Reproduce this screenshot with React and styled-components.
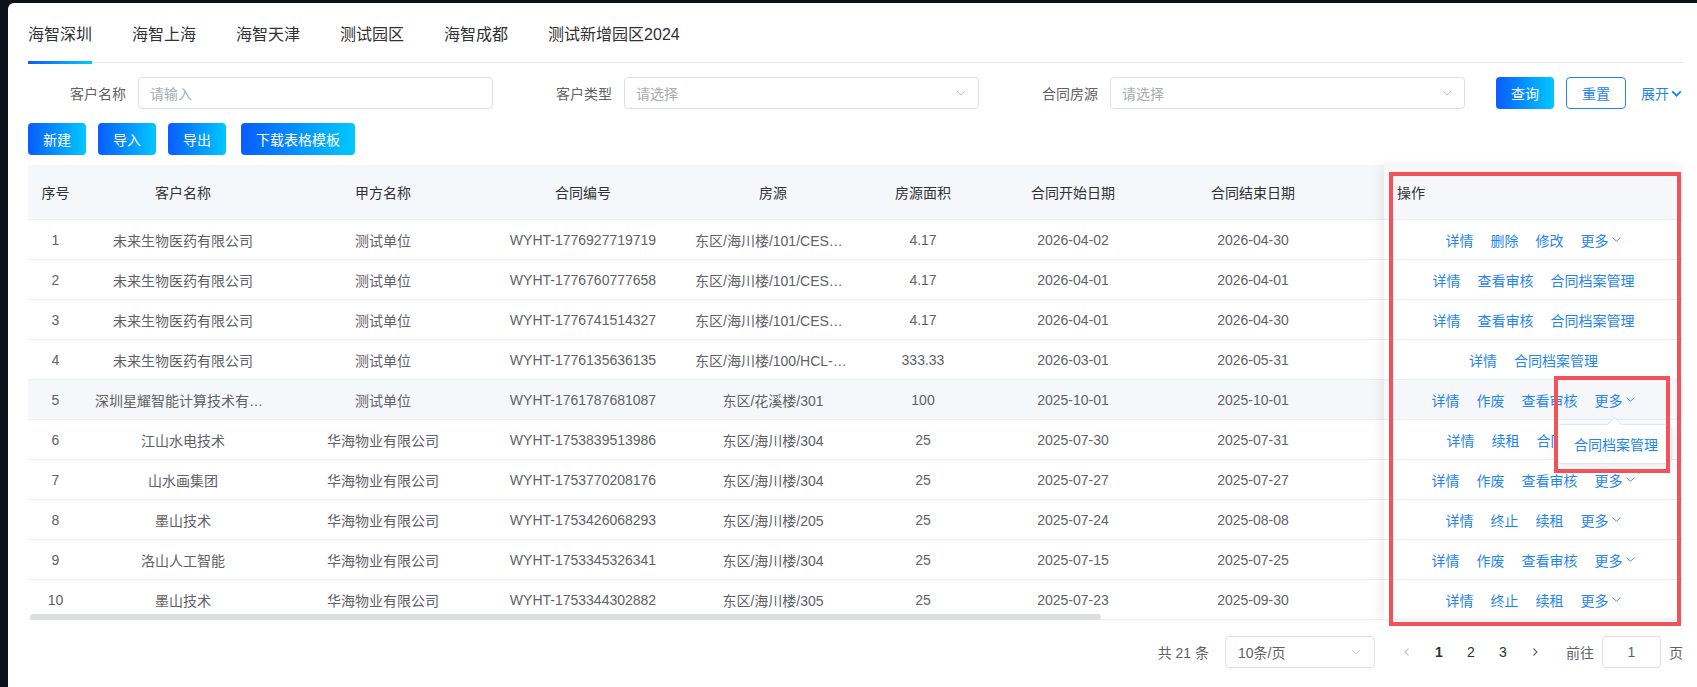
import styled, { createGlobalStyle } from "styled-components";

const GlobalStyle = createGlobalStyle`
  html, body {
    margin: 0;
    padding: 0;
    background: #0c111b;
  }
  body {
    font-family: "Liberation Sans", "Noto Sans CJK SC", sans-serif;
    font-size: 14px;
    color: #606266;
  }
  * { box-sizing: border-box; }
`;

const Page = styled.div`
  position: relative;
  width: 1697px;
  height: 687px;
  padding: 3px 0 0 8px;
  overflow: hidden;
`;

const Panel = styled.div`
  background: #fff;
  height: 684px;
  border-top-left-radius: 6px;
  padding: 0 14px 0 20px;
`;

// ---------- tabs ----------
const TabBar = styled.div`
  display: flex;
  gap: 40px;
  height: 60px;
  border-bottom: 1px solid #e4e7ed;
`;

const Tab = styled.div`
  position: relative;
  padding-top: 21px;
  font-size: 16px;
  line-height: 22px;
  color: #303133;
  height: 59px;

  &::after {
    content: "";
    display: ${p => (p.$active ? "block" : "none")};
    position: absolute;
    left: 0;
    right: 0;
    bottom: -2px;
    height: 3px;
    background: linear-gradient(90deg, #0a5cff, #00c8ff);
  }
`;

// ---------- filter ----------
const FilterRow = styled.div`
  display: flex;
  align-items: center;
  gap: 21px;
  margin-top: 14px;
  height: 32px;
`;

const Field = styled.div`
  display: flex;
  align-items: center;
  flex: 0 0 465px;
`;

const Label = styled.label`
  width: 110px;
  padding-right: 12px;
  text-align: right;
  color: #606266;
  font-size: 14px;
  white-space: nowrap;
`;

const InputBox = styled.div`
  flex: 1;
  height: 32px;
  border: 1px solid #dcdfe6;
  border-radius: 4px;
  padding: 0 11px;
  display: flex;
  align-items: center;
  justify-content: space-between;
  color: #a8abb2;
  font-size: 14px;
`;

const BtnGroup = styled.div`
  display: flex;
  align-items: center;
  gap: 12px;
  margin-left: 10px;
  flex-shrink: 0;
  white-space: nowrap;
`;

const GradBtn = styled.button`
  height: 32px;
  padding: 0 15px;
  border: none;
  border-radius: 4px;
  background: linear-gradient(90deg, #0a5cff, #00c8ff);
  color: #fff;
  font-family: inherit;
  font-size: 14px;
  white-space: nowrap;
  flex-shrink: 0;
  cursor: pointer;
`;

const PlainBtn = styled.button`
  height: 32px;
  padding: 0 15px;
  border: 1px solid #1f86f0;
  border-radius: 4px;
  background: #fff;
  color: #1f86f0;
  font-family: inherit;
  font-size: 14px;
  white-space: nowrap;
  flex-shrink: 0;
`;

const Expand = styled.span`
  display: flex;
  align-items: center;
  gap: 1px;
  margin-left: 3px;
  flex-shrink: 0;
  color: #1f86f0;
  font-size: 14px;
`;

const ToolRow = styled.div`
  display: flex;
  gap: 12px;
  margin-top: 14px;
`;

const TemplateBtn = styled(GradBtn)`
  margin-left: 3px;
`;

// ---------- table ----------
const TableWrap = styled.div`
  display: flex;
  margin-top: 10px;
  height: 455px;
`;

const MainPart = styled.div`
  position: relative;
  flex: 1;
  overflow: hidden;
`;

const Row = styled.div`
  display: flex;
  width: max-content;
  height: ${p => (p.$head ? "55px" : "40px")};
  border-bottom: 1px solid #ebeef5;
  background: ${p => (p.$head || p.$hover ? "#f5f7fa" : "#fff")};
  color: ${p => (p.$head ? "#303133" : "#606266")};
`;

const Cell = styled.div`
  flex: 0 0 ${p => p.$w}px;
  padding: 0 12px;
  display: flex;
  align-items: center;
  justify-content: center;
  overflow: hidden;

  span {
    display: block;
    max-width: 100%;
    white-space: nowrap;
    overflow: hidden;
    text-overflow: ellipsis;
  }
`;

const ScrollThumb = styled.div`
  position: absolute;
  left: 2px;
  top: 449px;
  width: 1071px;
  height: 6px;
  border-radius: 3px;
  background: #dcdee1;
`;

const FixedPart = styled.div`
  position: relative;
  width: 299px;
  flex-shrink: 0;
  box-shadow: -4px 0 10px rgba(0, 0, 0, 0.07);
`;

const FixedHead = styled.div`
  height: 55px;
  padding-left: 13px;
  display: flex;
  align-items: center;
  background: #f5f7fa;
  border-bottom: 1px solid #ebeef5;
  color: #303133;
`;

const ActionRow = styled.div`
  height: 40px;
  display: flex;
  align-items: center;
  justify-content: center;
  gap: 17px;
  border-bottom: 1px solid #ebeef5;
  background: ${p => (p.$hover ? "#f5f7fa" : "#fff")};
`;

const ActionLink = styled.span`
  display: inline-flex;
  align-items: center;
  gap: 2px;
  color: #1f86f0;
  white-space: nowrap;
  cursor: pointer;
`;

const Popover = styled.div`
  position: absolute;
  left: 173px;
  top: 259px;
  width: 115px;
  height: 40px;
  padding: 0 16px;
  display: flex;
  align-items: center;
  background: #fff;
  border: 1px solid #e4e7ed;
  border-radius: 4px;
  box-shadow: 0 2px 12px rgba(0, 0, 0, 0.1);
  color: #1f86f0;
  white-space: nowrap;

  &::before {
    content: "";
    position: absolute;
    top: -6px;
    left: 51px;
    width: 10px;
    height: 10px;
    background: #fff;
    border-left: 1px solid #e4e7ed;
    border-top: 1px solid #e4e7ed;
    transform: rotate(45deg);
  }
`;

// ---------- pagination ----------
const Pager = styled.div`
  display: flex;
  justify-content: flex-end;
  align-items: center;
  margin-top: 16px;
  height: 32px;
  color: #606266;
`;

const Total = styled.span`
  margin-right: 16px;
`;

const SizeSelect = styled.div`
  width: 150px;
  height: 32px;
  border: 1px solid #dcdfe6;
  border-radius: 4px;
  padding: 0 12px;
  display: flex;
  align-items: center;
  justify-content: space-between;
  color: #606266;
  margin-right: 16px;
`;

const PageBtn = styled.span`
  width: 32px;
  height: 32px;
  display: flex;
  align-items: center;
  justify-content: center;
  font-size: 14px;
  color: #303133;
  font-weight: ${p => (p.$active ? 700 : 400)};
`;

const Jump = styled.div`
  display: flex;
  align-items: center;
  gap: 8px;
  margin-left: 15px;
`;

const JumpInput = styled.div`
  width: 59px;
  height: 32px;
  border: 1px solid #dcdfe6;
  border-radius: 4px;
  display: flex;
  align-items: center;
  justify-content: center;
  color: #606266;
`;

// ---------- annotation boxes ----------
const Mark = styled.div`
  position: absolute;
  border: 4px solid #f4525a;
  pointer-events: none;
`;

const Chevron = ({ color = "#c0c4cc", size = 12, width = 1 }) => (
  <svg width={size} height={size} viewBox="0 0 12 12" fill="none">
    <polyline points="2,4 6,8 10,4" stroke={color} strokeWidth={width} />
  </svg>
);

const Arrow = ({ dir, color }) => (
  <svg width="10" height="10" viewBox="0 0 10 10" fill="none">
    {dir === "left" ? (
      <polyline points="6.5,1.5 3,5 6.5,8.5" stroke={color} strokeWidth="1.1" />
    ) : (
      <polyline points="3.5,1.5 7,5 3.5,8.5" stroke={color} strokeWidth="1.1" />
    )}
  </svg>
);

const tabs = ["海智深圳", "海智上海", "海智天津", "测试园区", "海智成都", "测试新增园区2024"];

const columns = [
  { title: "序号", w: 55 },
  { title: "客户名称", w: 200 },
  { title: "甲方名称", w: 200 },
  { title: "合同编号", w: 200 },
  { title: "房源", w: 180 },
  { title: "房源面积", w: 120 },
  { title: "合同开始日期", w: 180 },
  { title: "合同结束日期", w: 180 },
];

const more = "更多";

const rows = [
  ["1", "未来生物医药有限公司", "测试单位", "WYHT-1776927719719", "东区/海川楼/101/CESHI01", "4.17", "2026-04-02", "2026-04-30", ["详情", "删除", "修改", more]],
  ["2", "未来生物医药有限公司", "测试单位", "WYHT-1776760777658", "东区/海川楼/101/CESHI01", "4.17", "2026-04-01", "2026-04-01", ["详情", "查看审核", "合同档案管理"]],
  ["3", "未来生物医药有限公司", "测试单位", "WYHT-1776741514327", "东区/海川楼/101/CESHI01", "4.17", "2026-04-01", "2026-04-30", ["详情", "查看审核", "合同档案管理"]],
  ["4", "未来生物医药有限公司", "测试单位", "WYHT-1776135636135", "东区/海川楼/100/HCL-0001", "333.33", "2026-03-01", "2026-05-31", ["详情", "合同档案管理"]],
  ["5", "深圳星耀智能计算技术有限公司", "测试单位", "WYHT-1761787681087", "东区/花溪楼/301", "100", "2025-10-01", "2025-10-01", ["详情", "作废", "查看审核", more]],
  ["6", "江山水电技术", "华海物业有限公司", "WYHT-1753839513986", "东区/海川楼/304", "25", "2025-07-30", "2025-07-31", ["详情", "续租", "合同档案管理"]],
  ["7", "山水画集团", "华海物业有限公司", "WYHT-1753770208176", "东区/海川楼/304", "25", "2025-07-27", "2025-07-27", ["详情", "作废", "查看审核", more]],
  ["8", "墨山技术", "华海物业有限公司", "WYHT-1753426068293", "东区/海川楼/205", "25", "2025-07-24", "2025-08-08", ["详情", "终止", "续租", more]],
  ["9", "洛山人工智能", "华海物业有限公司", "WYHT-1753345326341", "东区/海川楼/304", "25", "2025-07-15", "2025-07-25", ["详情", "作废", "查看审核", more]],
  ["10", "墨山技术", "华海物业有限公司", "WYHT-1753344302882", "东区/海川楼/305", "25", "2025-07-23", "2025-09-30", ["详情", "终止", "续租", more]],
];

const App = () => {
  return (
    <Page>
      <GlobalStyle />
      <Panel>
        <TabBar>
          {tabs.map((t, i) => (
            <Tab key={t} $active={i === 0}>{t}</Tab>
          ))}
        </TabBar>

        <FilterRow>
          <Field>
            <Label>客户名称</Label>
            <InputBox>请输入</InputBox>
          </Field>
          <Field>
            <Label>客户类型</Label>
            <InputBox>
              请选择
              <Chevron />
            </InputBox>
          </Field>
          <Field>
            <Label>合同房源</Label>
            <InputBox>
              请选择
              <Chevron />
            </InputBox>
          </Field>
          <BtnGroup>
            <GradBtn>查询</GradBtn>
            <PlainBtn>重置</PlainBtn>
            <Expand>
              展开
              <Chevron color="#1f86f0" size={13} width={1.8} />
            </Expand>
          </BtnGroup>
        </FilterRow>

        <ToolRow>
          <GradBtn>新建</GradBtn>
          <GradBtn>导入</GradBtn>
          <GradBtn>导出</GradBtn>
          <TemplateBtn>下载表格模板</TemplateBtn>
        </ToolRow>

        <TableWrap>
          <MainPart>
            <Row $head>
              {columns.map(c => (
                <Cell key={c.title} $w={c.w}>
                  <span>{c.title}</span>
                </Cell>
              ))}
              <Cell $w={160} />
            </Row>
            {rows.map((r, i) => (
              <Row key={r[0]} $hover={i === 4}>
                {columns.map((c, j) => (
                  <Cell key={c.title} $w={c.w}>
                    <span>{r[j]}</span>
                  </Cell>
                ))}
                <Cell $w={160} />
              </Row>
            ))}
            <ScrollThumb />
          </MainPart>

          <FixedPart>
            <FixedHead>操作</FixedHead>
            {rows.map((r, i) => (
              <ActionRow key={r[0]} $hover={i === 4}>
                {r[8].map(a => (
                  <ActionLink key={a}>
                    {a}
                    {a === more && <Chevron color="#1f86f0" size={11} />}
                  </ActionLink>
                ))}
              </ActionRow>
            ))}
            <Popover>合同档案管理</Popover>
          </FixedPart>
        </TableWrap>

        <Pager>
          <Total>共 21 条</Total>
          <SizeSelect>
            10条/页
            <Chevron />
          </SizeSelect>
          <PageBtn>
            <Arrow dir="left" color="#c0c4cc" />
          </PageBtn>
          <PageBtn $active>1</PageBtn>
          <PageBtn>2</PageBtn>
          <PageBtn>3</PageBtn>
          <PageBtn>
            <Arrow dir="right" color="#606266" />
          </PageBtn>
          <Jump>
            前往
            <JumpInput>1</JumpInput>
            页
          </Jump>
        </Pager>
      </Panel>

      <Mark style={{ left: 1389, top: 172, width: 292, height: 454 }} />
      <Mark style={{ left: 1554, top: 376, width: 116, height: 97 }} />
    </Page>
  );
};

export default App;
